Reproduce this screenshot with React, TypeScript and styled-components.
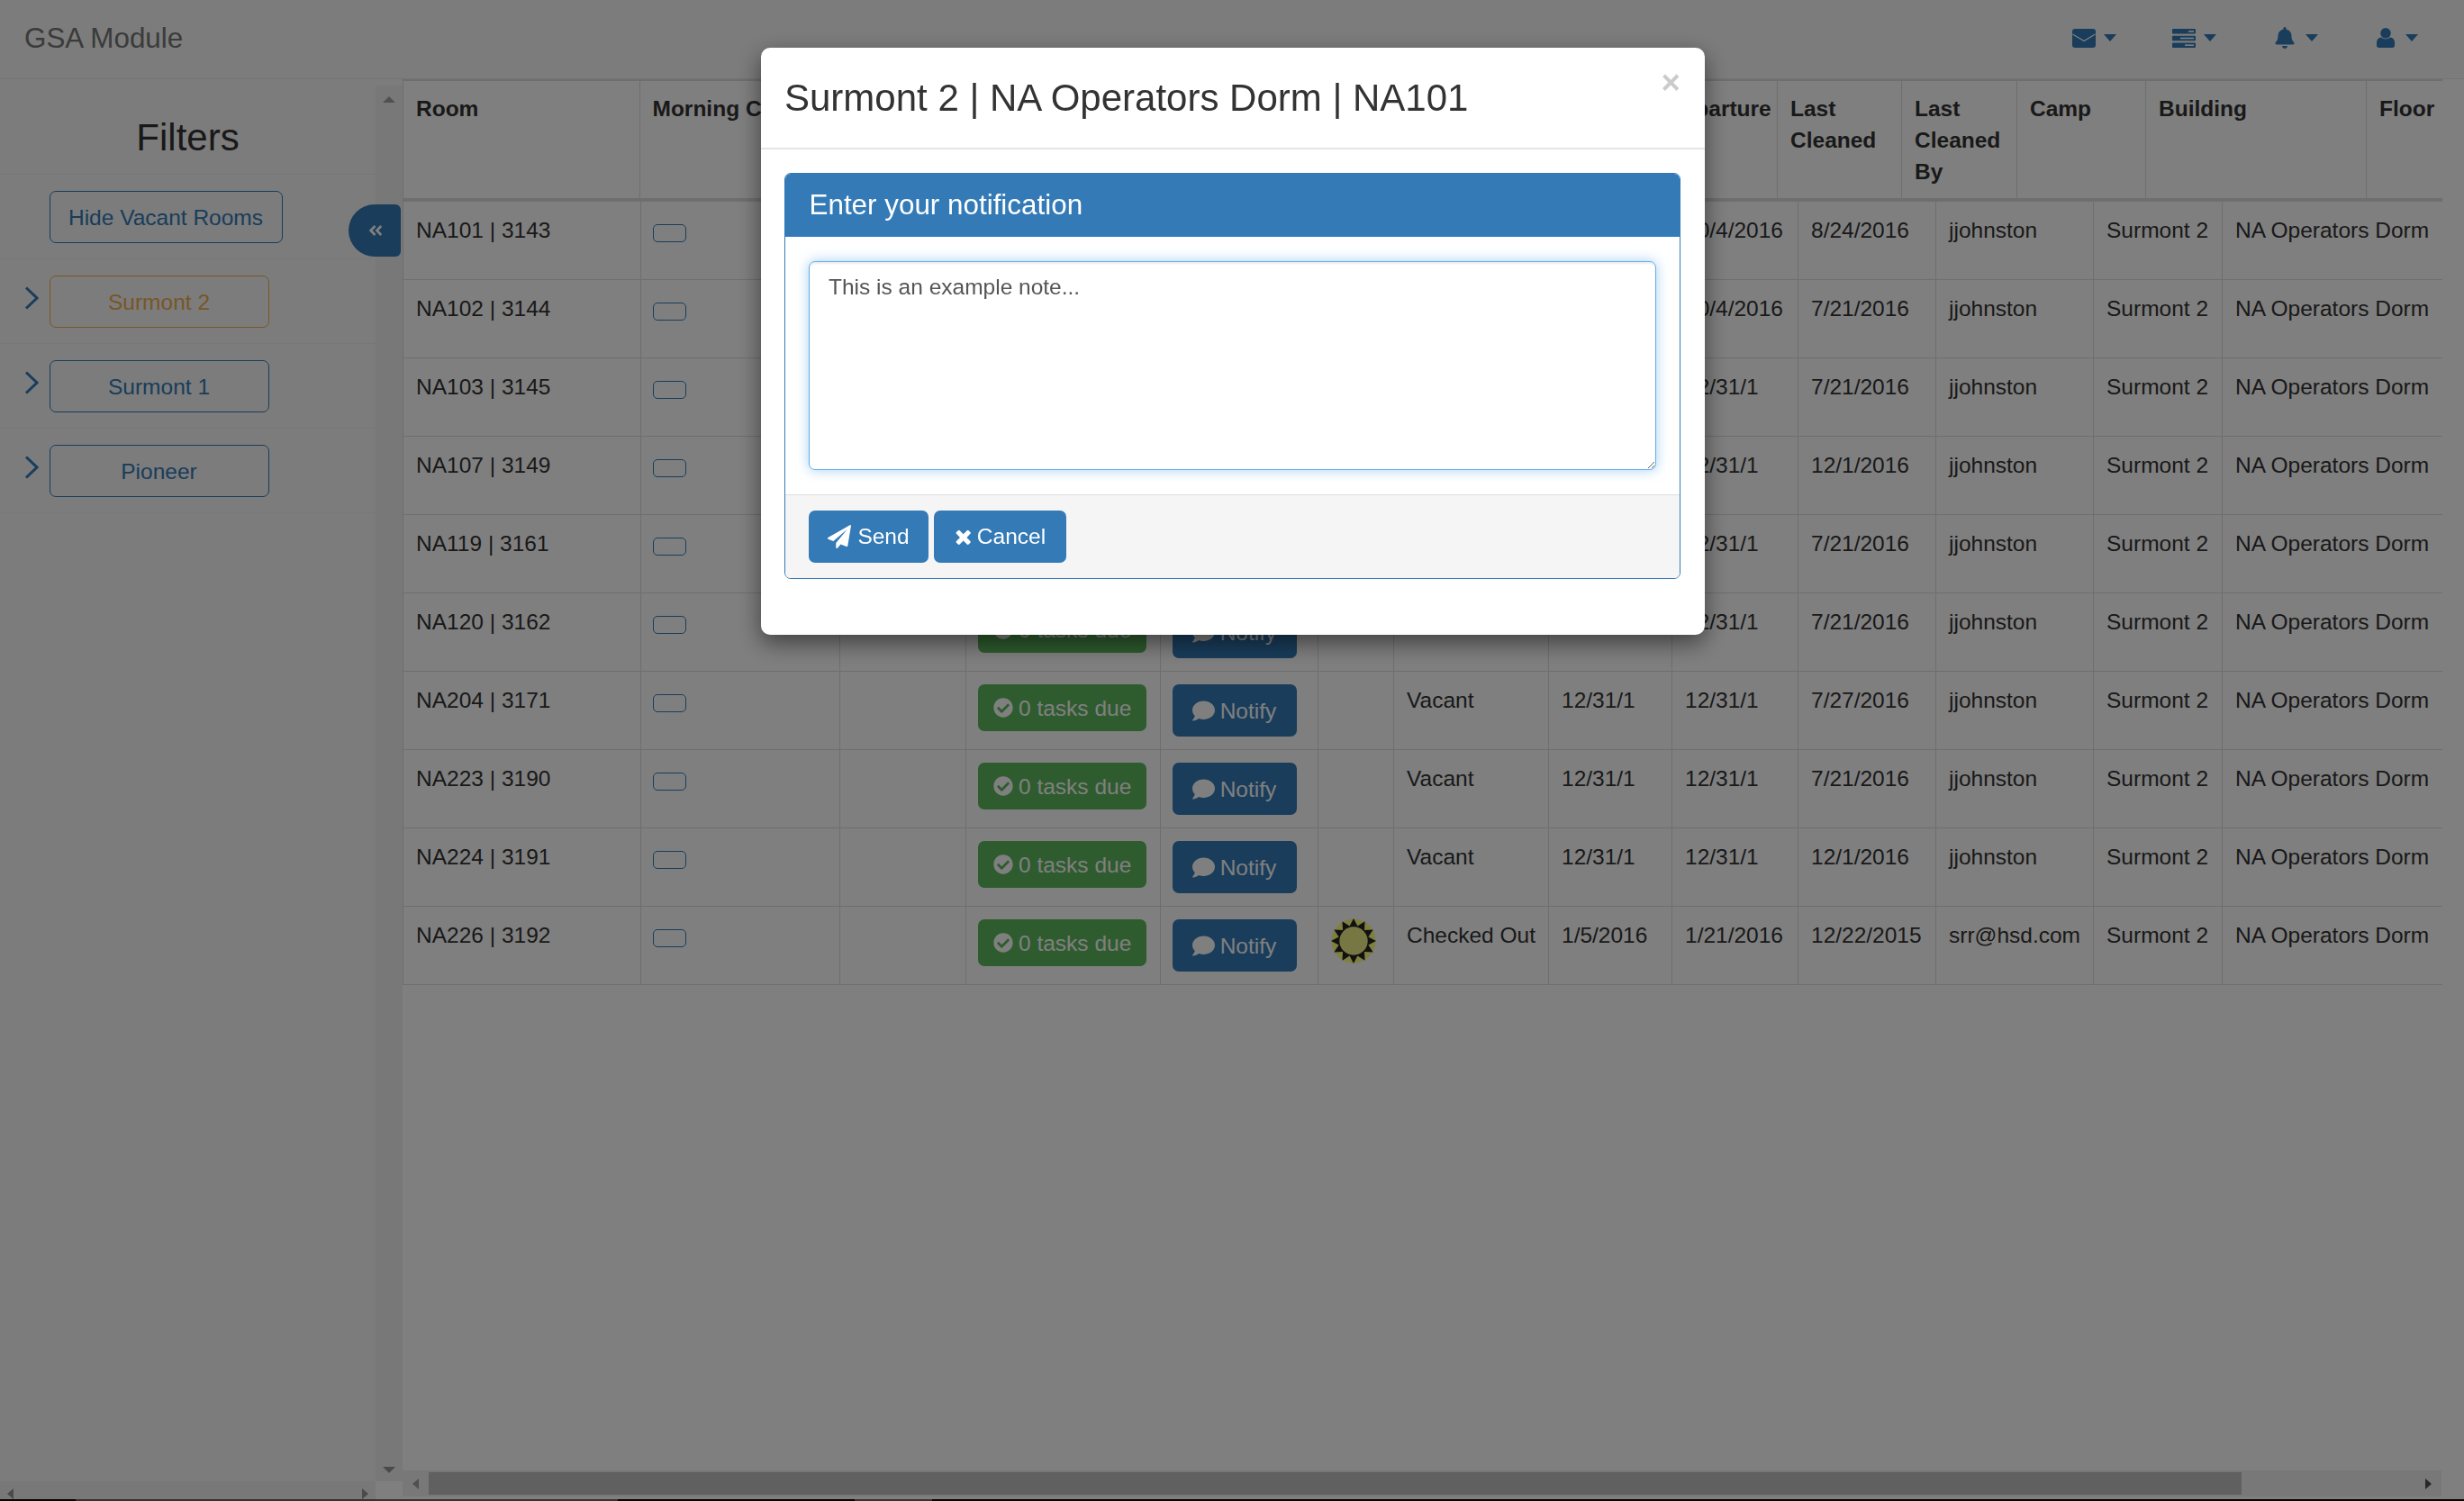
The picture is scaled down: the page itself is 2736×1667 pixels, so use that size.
import React from 'react';
import styled, { createGlobalStyle } from 'styled-components';
import { FaAngleDoubleLeft, FaBell, FaCheckCircle, FaComment } from 'react-icons/fa';

const color = {
  primary: '#337ab7',
  success: '#5cb85c',
  warning: '#f0ad4e',
  text: '#333333',
  border: '#dddddd',
  navBg: '#f8f8f8',
  track: '#f1f1f1',
  thumb: '#c1c1c1',
};

const GlobalStyle = createGlobalStyle`
  html, body {
    margin: 0;
    height: 100%;
    overflow: hidden;
    background: #ffffff;
    color: ${color.text};
    font-family: 'Liberation Sans', Arial, sans-serif;
    font-size: 24.5px;
    line-height: 35px;
  }
  #root { height: 100%; }
  * { box-sizing: border-box; }
`;

const StyledPage = styled.div`
  display: flex;
  flex-direction: column;
  height: 1667px;
`;

const StyledNavbar = styled.div`
  display: flex;
  align-items: center;
  justify-content: space-between;
  flex: 0 0 88px;
  padding: 0 51px 3px 27px;
  border-bottom: 1px solid #e7e7e7;
  background-color: ${color.navBg};
`;

const StyledBrand = styled.div`
  font-size: 31.4px;
  color: #777777;
`;

const StyledNavIcons = styled.div`
  display: flex;
  align-items: center;
`;

const StyledNavItem = styled.div<{ $before: number; $gap: number }>`
  display: flex;
  align-items: center;
  gap: ${(p) => p.$gap}px;
  margin-left: ${(p) => p.$before}px;
  color: ${color.primary};
`;

const StyledCaret = styled.span`
  width: 0;
  height: 0;
  border-top: 8px solid ${color.primary};
  border-left: 7.5px solid transparent;
  border-right: 7.5px solid transparent;
`;

const StyledMain = styled.div`
  display: flex;
  flex: 1;
  min-height: 0;
`;

const StyledSidebar = styled.div`
  position: relative;
  display: flex;
  flex-direction: column;
  flex: 0 0 447px;
  padding-top: 7px;
  background-color: ${color.navBg};
`;

const StyledSidebarBody = styled.div`
  display: flex;
  flex: 1;
  min-height: 0;
`;

const StyledSidebarContent = styled.div`
  flex: 1;
`;

const StyledFiltersTitle = styled.div`
  height: 99px;
  padding-top: 35px;
  border-bottom: 1px solid #eeeeee;
  font-size: 42px;
  line-height: 46px;
  text-align: center;
`;

const StyledFilterRow = styled.div`
  display: flex;
  align-items: flex-start;
  height: 94px;
  padding: 18px 0 0 27px;
  border-bottom: 1px solid #eeeeee;
`;

const StyledChevron = styled.svg`
  flex: 0 0 16px;
  margin: 12px 11.5px 0 0;
`;

const StyledOutlineButton = styled.div<{ $accent: string; $width: number; $indent?: boolean }>`
  display: flex;
  align-items: center;
  justify-content: center;
  width: ${(p) => p.$width}px;
  height: 58px;
  margin-left: ${(p) => (p.$indent ? 27.5 : 0)}px;
  border: 1px solid ${(p) => p.$accent};
  border-radius: 7px;
  color: ${(p) => p.$accent};
`;

const StyledCollapse = styled.div`
  position: absolute;
  top: 139px;
  left: 387px;
  display: flex;
  align-items: center;
  justify-content: center;
  width: 58px;
  height: 58px;
  padding-left: 2px;
  border-radius: 29px 6px 6px 29px;
  background-color: ${color.primary};
  color: #ffffff;
  font-size: 18px;
  z-index: 2;
`;

const StyledVScrollbar = styled.div`
  display: flex;
  flex-direction: column;
  align-items: center;
  justify-content: space-between;
  flex: 0 0 30px;
  padding: 12px 0 9px;
  background-color: ${color.track};
`;

const StyledSidebarFooter = styled.div`
  display: flex;
  flex: 0 0 16px;
`;

const StyledSideHScrollbar = styled.div`
  display: flex;
  justify-content: space-between;
  flex: 1;
  overflow: hidden;
  padding: 8px 8px 0 8px;
  background-color: ${color.track};
`;

const StyledCorner = styled.div`
  flex: 0 0 30px;
  background-color: #ffffff;
`;

const StyledArrowUp = styled.span<{ $shade: string }>`
  width: 0;
  height: 0;
  border-bottom: 7px solid ${(p) => p.$shade};
  border-left: 7px solid transparent;
  border-right: 7px solid transparent;
`;

const StyledArrowDown = styled.span<{ $shade: string }>`
  width: 0;
  height: 0;
  border-top: 7px solid ${(p) => p.$shade};
  border-left: 7px solid transparent;
  border-right: 7px solid transparent;
`;

const StyledArrowLeft = styled.span<{ $shade: string }>`
  width: 0;
  height: 0;
  flex: none;
  border-right: 7px solid ${(p) => p.$shade};
  border-top: 6.5px solid transparent;
  border-bottom: 6.5px solid transparent;
`;

const StyledArrowRight = styled.span<{ $shade: string }>`
  width: 0;
  height: 0;
  flex: none;
  border-left: 7px solid ${(p) => p.$shade};
  border-top: 6.5px solid transparent;
  border-bottom: 6.5px solid transparent;
`;

const StyledContent = styled.div`
  display: flex;
  flex-direction: column;
  flex: 1;
  min-width: 0;
`;

const StyledTable = styled.table`
  flex: none;
  width: 2264px;
  table-layout: fixed;
  border-collapse: collapse;
`;

const StyledHeaderCell = styled.th`
  padding: 13px 14px 12px;
  border: 1px solid ${color.border};
  border-top-width: 2px;
  border-bottom-width: 3px;
  overflow: hidden;
  font-weight: 700;
  text-align: left;
  vertical-align: top;
  &:last-child { border-right: none; }
`;

const StyledCell = styled.td`
  height: 87px;
  padding: 14px;
  border: 1px solid ${color.border};
  overflow: hidden;
  vertical-align: top;
  white-space: nowrap;
  &:last-child { border-right: none; }
`;

const StyledMorningCheck = styled.span`
  display: block;
  width: 37px;
  height: 20px;
  margin: 11px 0 0 -1px;
  border: 1px solid ${color.primary};
  border-radius: 5px;
`;

const StyledTasksDue = styled.span`
  display: inline-flex;
  align-items: center;
  gap: 6px;
  height: 52px;
  margin-left: -1px;
  padding: 0 17px;
  border-radius: 7px;
  background-color: ${color.success};
  color: #ffffff;
  vertical-align: top;
`;

const StyledNotify = styled.span`
  display: inline-flex;
  align-items: center;
  justify-content: center;
  gap: 6px;
  width: 138px;
  height: 58px;
  margin-left: -1px;
  border-radius: 7px;
  background-color: ${color.primary};
  color: #ffffff;
  vertical-align: top;
`;

const StyledSun = styled.svg`
  display: block;
  margin: -1px 0 0 0;
`;

const StyledSpacer = styled.div`
  flex: 1;
`;

const StyledHScrollbar = styled.div`
  display: flex;
  align-items: center;
  flex: 0 0 29px;
  margin: 0 25px 3px 0;
  padding-left: 11px;
  background-color: ${color.track};
`;

const StyledHThumb = styled.div`
  flex: 0 0 2013px;
  height: 25px;
  margin-left: 11px;
  background-color: ${color.thumb};
`;

const StyledHTrackRest = styled.div`
  display: flex;
  justify-content: flex-end;
  flex: 1;
  padding-right: 11px;
`;

const StyledStatusStrip = styled.div`
  display: grid;
  grid-template-columns: 84px 602px 263px 86px 1fr;
  flex: 0 0 2px;
  background-color: #000000;
`;

const StyledStripThumb = styled.div<{ $lit?: boolean }>`
  background-color: ${(p) => (p.$lit ? '#666666' : 'transparent')};
`;

const StyledBackdrop = styled.div`
  position: fixed;
  inset: 0;
  display: flex;
  align-items: flex-start;
  justify-content: center;
  padding: 53px 0 0 2px;
  background-color: rgba(0, 0, 0, 0.5);
  z-index: 10;
`;

const StyledModal = styled.div`
  position: relative;
  width: 1048px;
  height: 652px;
  border-radius: 10px;
  background-color: #ffffff;
  box-shadow: 0 9px 26px rgba(0, 0, 0, 0.5);
`;

const StyledModalHeader = styled.div`
  display: flex;
  align-items: center;
  height: 113px;
  padding: 0 26px;
  border-bottom: 2px solid #e5e5e5;
`;

const StyledModalTitle = styled.div`
  font-size: 42px;
  line-height: 46px;
`;

const StyledClose = styled.span`
  position: absolute;
  top: 21px;
  right: 27px;
  color: #000000;
  opacity: 0.2;
  font-size: 36.7px;
  font-weight: 700;
  line-height: 36px;
`;

const StyledModalBody = styled.div`
  padding: 26px 27px 0 26px;
`;

const StyledPanel = styled.div`
  border: 1px solid ${color.primary};
  border-radius: 7px;
  overflow: hidden;
`;

const StyledPanelHeading = styled.div`
  display: flex;
  align-items: center;
  height: 70px;
  padding: 0 26.5px 2px;
  background-color: ${color.primary};
  color: #ffffff;
  font-size: 31.4px;
`;

const StyledPanelBody = styled.div`
  padding: 27px 26px;
`;

const StyledTextarea = styled.textarea`
  display: block;
  width: 100%;
  height: 232px;
  padding: 10px 21px;
  border: 1px solid #66afe9;
  border-radius: 7px;
  outline: none;
  background: #ffffff;
  box-shadow: inset 0 2px 2px rgba(0, 0, 0, 0.075), 0 0 14px rgba(102, 175, 233, 0.6);
  color: #555555;
  font-family: inherit;
  font-size: 24.5px;
  line-height: 35px;
`;

const StyledPanelFooter = styled.div`
  display: flex;
  gap: 6px;
  padding: 17px 26px;
  border-top: 1px solid ${color.border};
  background-color: #f5f5f5;
`;

const StyledModalButton = styled.button<{ $width: number }>`
  display: inline-flex;
  align-items: center;
  justify-content: center;
  gap: 7px;
  width: ${(p) => p.$width}px;
  height: 58px;
  padding: 0;
  border: none;
  border-radius: 7px;
  background-color: ${color.primary};
  color: #ffffff;
  font-family: inherit;
  font-size: 24.5px;
`;

const headerColumns = [
  { title: 'Room', width: 262.5 },
  { title: 'Morning Clean', width: 220.5 },
  { title: '', width: 140 },
  { title: '', width: 215 },
  { title: '', width: 175 },
  { title: '', width: 85 },
  { title: '', width: 170 },
  { title: '', width: 121 },
  { title: 'Departure', width: 137 },
  { title: 'Last Cleaned', width: 138 },
  { title: 'Last Cleaned By', width: 128 },
  { title: 'Camp', width: 143 },
  { title: 'Building', width: 245 },
  { title: 'Floor', width: 84 },
];

const bodyColumns = [264, 221, 140, 215.5, 175, 84.5, 172, 137, 140, 153, 175, 143, 244];

const rooms = [
  { room: 'NA101 | 3143', departure: '10/4/2016', cleaned: '8/24/2016' },
  { room: 'NA102 | 3144', departure: '10/4/2016', cleaned: '7/21/2016' },
  { room: 'NA103 | 3145', departure: '12/31/1', cleaned: '7/21/2016' },
  { room: 'NA107 | 3149', departure: '12/31/1', cleaned: '12/1/2016' },
  { room: 'NA119 | 3161', departure: '12/31/1', cleaned: '7/21/2016' },
  { room: 'NA120 | 3162', departure: '12/31/1', cleaned: '7/21/2016' },
  { room: 'NA204 | 3171', status: 'Vacant', arrival: '12/31/1', departure: '12/31/1', cleaned: '7/27/2016' },
  { room: 'NA223 | 3190', status: 'Vacant', arrival: '12/31/1', departure: '12/31/1', cleaned: '7/21/2016' },
  { room: 'NA224 | 3191', status: 'Vacant', arrival: '12/31/1', departure: '12/31/1', cleaned: '12/1/2016' },
  {
    room: 'NA226 | 3192',
    status: 'Checked Out',
    arrival: '1/5/2016',
    departure: '1/21/2016',
    cleaned: '12/22/2015',
    cleanedBy: 'srr@hsd.com',
    sun: true,
  },
];

const filterGroups = [
  { name: 'Surmont 2', accent: color.warning },
  { name: 'Surmont 1', accent: color.primary },
  { name: 'Pioneer', accent: color.primary },
];

// twelve spikes around a disc
const sunPoints = Array.from({ length: 24 }, (_, i) => {
  const radius = i % 2 === 0 ? 25 : 17;
  const angle = (i * Math.PI) / 12 - Math.PI / 2;
  return `${(25 + radius * Math.cos(angle)).toFixed(1)},${(25 + radius * Math.sin(angle)).toFixed(1)}`;
}).join(' ');

const EnvelopeIcon = () => (
  <svg width='26' height='21' viewBox='0 0 26 21'>
    <rect width='26' height='21' rx='3' fill={color.primary} />
    <polyline points='0.5,6 13,13.5 25.5,6' fill='none' stroke='#ffffff' strokeWidth='1.3' />
  </svg>
);

const TasksIcon = () => (
  <svg width='26' height='21' viewBox='0 0 26 21'>
    <rect y='0' width='26' height='5.6' rx='1' fill={color.primary} />
    <rect y='7.7' width='26' height='5.6' rx='1' fill={color.primary} />
    <rect y='15.4' width='26' height='5.6' rx='1' fill={color.primary} />
    <rect x='18' y='2' width='6' height='1.6' fill='#ffffff' />
    <rect x='9' y='9.7' width='15' height='1.6' fill='#ffffff' />
    <rect x='14' y='17.4' width='10' height='1.6' fill='#ffffff' />
  </svg>
);

const UserIcon = () => (
  <svg width='20' height='22' viewBox='0 0 20 22'>
    <circle cx='10' cy='5.8' r='5.8' fill={color.primary} />
    <path
      d='M5 10.5c1.3 1.2 3 1.8 5 1.8s3.700-.6 5-1.800c3 .4 5 2.400 5 5.500v3.500c0 1.500-1 2.500-2.500 2.500h-15C1 22 0 21 0 19.500V16c0-3.100 2-5.100 5-5.500z'
      fill={color.primary}
    />
  </svg>
);

const SendIcon = () => (
  <svg width='26' height='26' viewBox='0 0 1792 1792' fill='currentColor'>
    <path d='M1764 11q33 24 27 64l-256 1536q-5 29-32 45-14 8-31 8-11 0-24-5l-453-185-242 295q-18 23-49 23-13 0-22-4-19-7-30.500-23.500t-11.500-36.500v-349l864-1059-1069 925-395-162q-37-14-40-55-2-40 32-59l1664-960q15-9 32-9 20 0 36 11z' />
  </svg>
);

const CancelIcon = () => (
  <svg width='18' height='18' viewBox='198 238 1292 1316' fill='currentColor'>
    <path d='M1490 1322q0 40-28 68l-136 136q-28 28-68 28t-68-28l-294-294-294 294q-28 28-68 28t-68-28l-136-136q-28-28-28-68t28-68l294-294-294-294q-28-28-28-68t28-68l136-136q28-28 68-28t68 28l294 294 294-294q28-28 68-28t68 28l136 136q28 28 28 68t-28 68l-294 294 294 294q28 28 28 68z' />
  </svg>
);

const App = () => {
  return (
    <StyledPage>
      <GlobalStyle />
      <StyledNavbar>
        <StyledBrand>GSA Module</StyledBrand>
        <StyledNavIcons>
          <StyledNavItem $before={0} $gap={9}>
            <EnvelopeIcon />
            <StyledCaret />
          </StyledNavItem>
          <StyledNavItem $before={62} $gap={9}>
            <TasksIcon />
            <StyledCaret />
          </StyledNavItem>
          <StyledNavItem $before={64} $gap={11}>
            <FaBell size={24} />
            <StyledCaret />
          </StyledNavItem>
          <StyledNavItem $before={65} $gap={12}>
            <UserIcon />
            <StyledCaret />
          </StyledNavItem>
        </StyledNavIcons>
      </StyledNavbar>

      <StyledMain>
        <StyledSidebar>
          <StyledSidebarBody>
            <StyledSidebarContent>
              <StyledFiltersTitle>Filters</StyledFiltersTitle>
              <StyledFilterRow>
                <StyledOutlineButton $accent={color.primary} $width={259} $indent>
                  Hide Vacant Rooms
                </StyledOutlineButton>
              </StyledFilterRow>
              {filterGroups.map((group) => (
                <StyledFilterRow key={group.name}>
                  <StyledChevron width='16' height='26' viewBox='0 0 16 26'>
                    <polyline
                      points='2,1.500 14,13 2,24.500'
                      fill='none'
                      stroke={color.primary}
                      strokeWidth='3'
                    />
                  </StyledChevron>
                  <StyledOutlineButton $accent={group.accent} $width={244}>
                    {group.name}
                  </StyledOutlineButton>
                </StyledFilterRow>
              ))}
            </StyledSidebarContent>
            <StyledVScrollbar>
              <StyledArrowUp $shade='#a3a3a3' />
              <StyledArrowDown $shade='#949494' />
            </StyledVScrollbar>
          </StyledSidebarBody>
          <StyledSidebarFooter>
            <StyledSideHScrollbar>
              <StyledArrowLeft $shade='#949494' />
              <StyledArrowRight $shade='#949494' />
            </StyledSideHScrollbar>
            <StyledCorner />
          </StyledSidebarFooter>
          <StyledCollapse>
            <FaAngleDoubleLeft />
          </StyledCollapse>
        </StyledSidebar>

        <StyledContent>
          <StyledTable>
            <colgroup>
              {headerColumns.map((column, index) => (
                <col key={index} width={column.width} />
              ))}
            </colgroup>
            <thead>
              <tr>
                {headerColumns.map((column, index) => (
                  <StyledHeaderCell key={index}>{column.title}</StyledHeaderCell>
                ))}
              </tr>
            </thead>
          </StyledTable>
          <StyledTable>
            <colgroup>
              {bodyColumns.map((width, index) => (
                <col key={index} width={width} />
              ))}
            </colgroup>
            <tbody>
              {rooms.map((item) => (
                <tr key={item.room}>
                  <StyledCell>{item.room}</StyledCell>
                  <StyledCell>
                    <StyledMorningCheck />
                  </StyledCell>
                  <StyledCell />
                  <StyledCell>
                    <StyledTasksDue>
                      <FaCheckCircle size={22} />0 tasks due
                    </StyledTasksDue>
                  </StyledCell>
                  <StyledCell>
                    <StyledNotify>
                      <FaComment size={25} />
                      Notify
                    </StyledNotify>
                  </StyledCell>
                  <StyledCell>
                    {item.sun && (
                      <StyledSun width='50' height='50' viewBox='0 0 50 50'>
                        <circle cx='25' cy='25' r='24.500' fill='#ffff80' />
                        <polygon points={sunPoints} fill='#222222' />
                        <circle cx='25' cy='25' r='15.700' fill='#eeee88' />
                      </StyledSun>
                    )}
                  </StyledCell>
                  <StyledCell>{item.status}</StyledCell>
                  <StyledCell>{item.arrival}</StyledCell>
                  <StyledCell>{item.departure}</StyledCell>
                  <StyledCell>{item.cleaned}</StyledCell>
                  <StyledCell>{item.cleanedBy ?? 'jjohnston'}</StyledCell>
                  <StyledCell>Surmont 2</StyledCell>
                  <StyledCell>NA Operators Dorm</StyledCell>
                </tr>
              ))}
            </tbody>
          </StyledTable>
          <StyledSpacer />
          <StyledHScrollbar>
            <StyledArrowLeft $shade='#a0a0a0' />
            <StyledHThumb />
            <StyledHTrackRest>
              <StyledArrowRight $shade='#505050' />
            </StyledHTrackRest>
          </StyledHScrollbar>
        </StyledContent>
      </StyledMain>

      <StyledStatusStrip>
        <StyledStripThumb />
        <StyledStripThumb $lit />
        <StyledStripThumb />
        <StyledStripThumb $lit />
        <StyledStripThumb />
      </StyledStatusStrip>

      <StyledBackdrop>
        <StyledModal>
          <StyledClose>×</StyledClose>
          <StyledModalHeader>
            <StyledModalTitle>Surmont 2 | NA Operators Dorm | NA101</StyledModalTitle>
          </StyledModalHeader>
          <StyledModalBody>
            <StyledPanel>
              <StyledPanelHeading>Enter your notification</StyledPanelHeading>
              <StyledPanelBody>
                <StyledTextarea readOnly defaultValue='This is an example note...' />
              </StyledPanelBody>
              <StyledPanelFooter>
                <StyledModalButton $width={133}>
                  <SendIcon />
                  Send
                </StyledModalButton>
                <StyledModalButton $width={147}>
                  <CancelIcon />
                  Cancel
                </StyledModalButton>
              </StyledPanelFooter>
            </StyledPanel>
          </StyledModalBody>
        </StyledModal>
      </StyledBackdrop>
    </StyledPage>
  );
};

export default App;
